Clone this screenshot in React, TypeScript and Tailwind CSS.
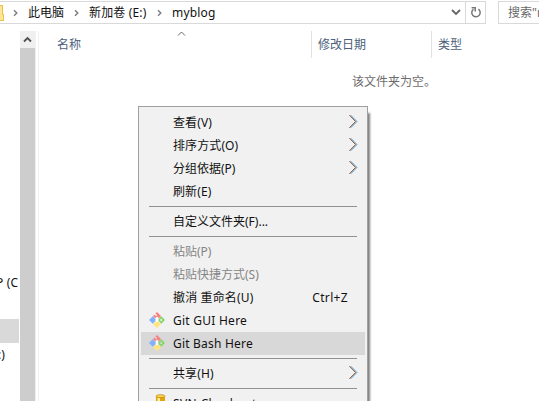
import React from "react";

const Arrow = () => (
  <svg className="absolute right-[7px] top-[3px]" width="10" height="15" viewBox="0 0 10 15" fill="none">
    <path d="M2.8 1.2L9 7.5L2.8 13.8" stroke="#4aa8f5" strokeWidth="1" />
    <path d="M1.5 1.2L7.7 7.5L1.5 13.8" stroke="#84400f" strokeWidth="1" />
  </svg>
);

const GitIcon = () => (
  <svg className="absolute left-[8px] top-[3px]" width="16" height="16" viewBox="0 0 16 16">
    <path d="M8 0L12 4L9.8 6.2L8 4.4L6.2 6.2L4 4L5.2 2.8L7.2 4L8.4 3.2L6.4 1.6Z" fill="#f88080" />
    <path d="M3.7 4.3L6.4 7V9L3.7 11.7L0 8Z" fill="#80b3ff" />
    <path fillRule="evenodd" d="M12.3 4.3L16 8L12.3 11.7L9.6 9V7ZM11.4 7V9H13V7Z" fill="#87d76b" />
    <path d="M6.8 9.6H9.2L12 12.2L8 16L4 12.2Z" fill="#ffe680" />
    <path d="M8 5.2V10" stroke="#fff" strokeWidth="1.8" />
  </svg>
);

const DatabaseIcon = () => (
  <svg className="absolute left-[14px] top-[2px]" width="12" height="16" viewBox="0 0 12 16">
    <path d="M1 2V14H10V2Z" fill="#e3a20e" />
    <path d="M2.5 3V14H5V3Z" fill="#fff09a" />
    <ellipse cx="5.5" cy="2.2" rx="4.5" ry="1.5" fill="#ffd64c" stroke="#b5800c" strokeWidth=".7" />
  </svg>
);

type ItemProps = {
  label: string;
  tracking?: string;
  arrow?: boolean;
  disabled?: boolean;
  active?: boolean;
  icon?: React.ReactNode;
  shortcut?: string;
};

const Item = ({ label, tracking = "", arrow, disabled, active, icon, shortcut }: ItemProps) => (
  <div className={`relative flex h-[23px] shrink-0 items-center pl-8 ${active ? "bg-[#d8d8d8]" : ""} ${disabled ? "text-[#858585]" : "text-[#111]"}`}>
    {icon}
    <span className={`whitespace-pre ${tracking}`}>{label}</span>
    {shortcut && <span className="ml-auto mr-[17px] tracking-[0.35px]">{shortcut}</span>}
    {arrow && <Arrow />}
  </div>
);

const Separator = () => (
  <div className="mx-2 flex h-[7px] shrink-0 items-center">
    <div className="h-px w-full bg-[#919191]" />
  </div>
);

const Crumb = () => (
  <svg className="shrink-0" width="6" height="8" viewBox="0 0 6 8" fill="none">
    <path d="M1 1.2L3.8 4L1 6.8" stroke="#7c7c7c" strokeWidth="1.4" />
  </svg>
);

export default function App() {
  return (
    <div className="relative flex h-[401px] w-[539px] flex-col overflow-hidden bg-white font-['Noto_Sans','Noto_Sans_CJK_SC',sans-serif] text-[12px] leading-[16px] text-[#111]">
      <div className="flex h-[31px] shrink-0 items-start pt-px">
        <div className="flex h-[23px] w-[486px] shrink-0 items-center border border-l-0 border-[#d9d9d9]">
          <svg width="4" height="16" viewBox="0 0 4 16" className="mr-[9px] shrink-0">
            <path d="M0 0H3V9H4V16H0Z" fill="#e9c34c" />
            <path d="M0 1H2V10H3V15H0Z" fill="#ffe694" />
          </svg>
          <Crumb />
          <span className="ml-[9px] w-[46px]">此电脑</span>
          <Crumb />
          <span className="ml-[9px] w-[68px] whitespace-pre tracking-[0.15px]">新加卷 (E:)</span>
          <Crumb />
          <span className="ml-[9px] tracking-[0.2px]">myblog</span>
          <svg className="ml-auto mr-[4px]" width="10" height="7" viewBox="0 0 10 7" fill="none">
            <path d="M1 1L5 5L9 1" stroke="#666" strokeWidth="1.8" />
          </svg>
          <div className="flex h-full w-[20px] items-center justify-center border-l border-[#d9d9d9]">
            <svg width="12" height="13" viewBox="0 0 12 13" fill="none">
              <path d="M8.4 3.2A4.2 4.2 0 1 1 3.4 3.3" stroke="#777" strokeWidth="1.5" />
              <path d="M1.6 1.7H5.2V5.4" stroke="#777" strokeWidth="1.5" />
            </svg>
          </div>
        </div>
        <div className="ml-3 flex h-[23px] min-w-0 flex-1 items-center overflow-hidden border border-r-0 border-[#d9d9d9] pl-[9px] text-[#686868]">
          <span className="whitespace-nowrap">搜索"myblog"</span>
        </div>
      </div>

      <div className="flex min-h-0 flex-1">
        <div className="flex w-5 shrink-0 flex-col overflow-hidden pt-[244px]">
          <span className="-ml-[4px] whitespace-pre tracking-[0.2px]">P (C</span>
          <div className="mt-7 h-6 w-[19px] shrink-0 bg-[#d9d9d9]" />
          <span className="-ml-[2px] mt-[4px]">:)</span>
        </div>
        <div className="flex w-[16px] shrink-0 flex-col bg-[#f0f0f0] pr-px">
          <div className="flex h-[17px] items-center justify-center">
            <svg width="9" height="7" viewBox="0 0 9 7" fill="none">
              <path d="M1 5.5L4.5 2L8 5.5" stroke="#505050" strokeWidth="1.8" />
            </svg>
          </div>
          <div className="flex-1 bg-[#cdcdcd]" />
        </div>
        <div className="ml-[2px] flex min-w-0 flex-1 flex-col border-l border-[#f0f0f0]">
          <div className="flex h-[27px] text-[#4c607a]">
            <div className="relative flex w-[273px] items-center border-r border-[#e2e2e2] pl-[18px]">
              名称
              <svg className="absolute left-[138px] top-0" width="9" height="5" viewBox="0 0 9 5" fill="none">
                <path d="M1 4.5L4.5 1L8 4.5" stroke="#666" />
              </svg>
            </div>
            <div className="flex w-[120px] items-center border-r border-[#e2e2e2] pl-[6px]">修改日期</div>
            <div className="flex items-center pl-[6px]">类型</div>
          </div>
          <div className="mt-[16px] pl-[313px] text-[#6d6d6d]">该文件夹为空。</div>
        </div>
      </div>

      <div className="absolute left-[138px] top-[106px] flex h-[310px] w-[230px] flex-col border border-[#a0a0a0] bg-[#f1f1f1] px-[2px] pt-1 shadow-[2px_7px_2px_rgba(0,0,0,0.5)]">
        <Item label="查看(V)" tracking="tracking-[0.1px]" arrow />
        <Item label="排序方式(O)" tracking="tracking-[0.1px]" arrow />
        <Item label="分组依据(P)" arrow />
        <Item label="刷新(E)" tracking="tracking-[0.1px]" />
        <Separator />
        <Item label="自定义文件夹(F)..." />
        <Separator />
        <Item label="粘贴(P)" disabled />
        <Item label="粘贴快捷方式(S)" disabled />
        <Item label="撤消 重命名(U)" tracking="tracking-[0.15px]" shortcut="Ctrl+Z" />
        <Item label="Git GUI Here" tracking="tracking-[0.25px]" icon={<GitIcon />} />
        <Item label="Git Bash Here" tracking="tracking-[0.2px]" active icon={<GitIcon />} />
        <Separator />
        <Item label="共享(H)" tracking="tracking-[0.1px]" arrow />
        <Separator />
        <Item label="SVN Checkout..." tracking="tracking-[0.4px]" icon={<DatabaseIcon />} />
      </div>
    </div>
  );
}
